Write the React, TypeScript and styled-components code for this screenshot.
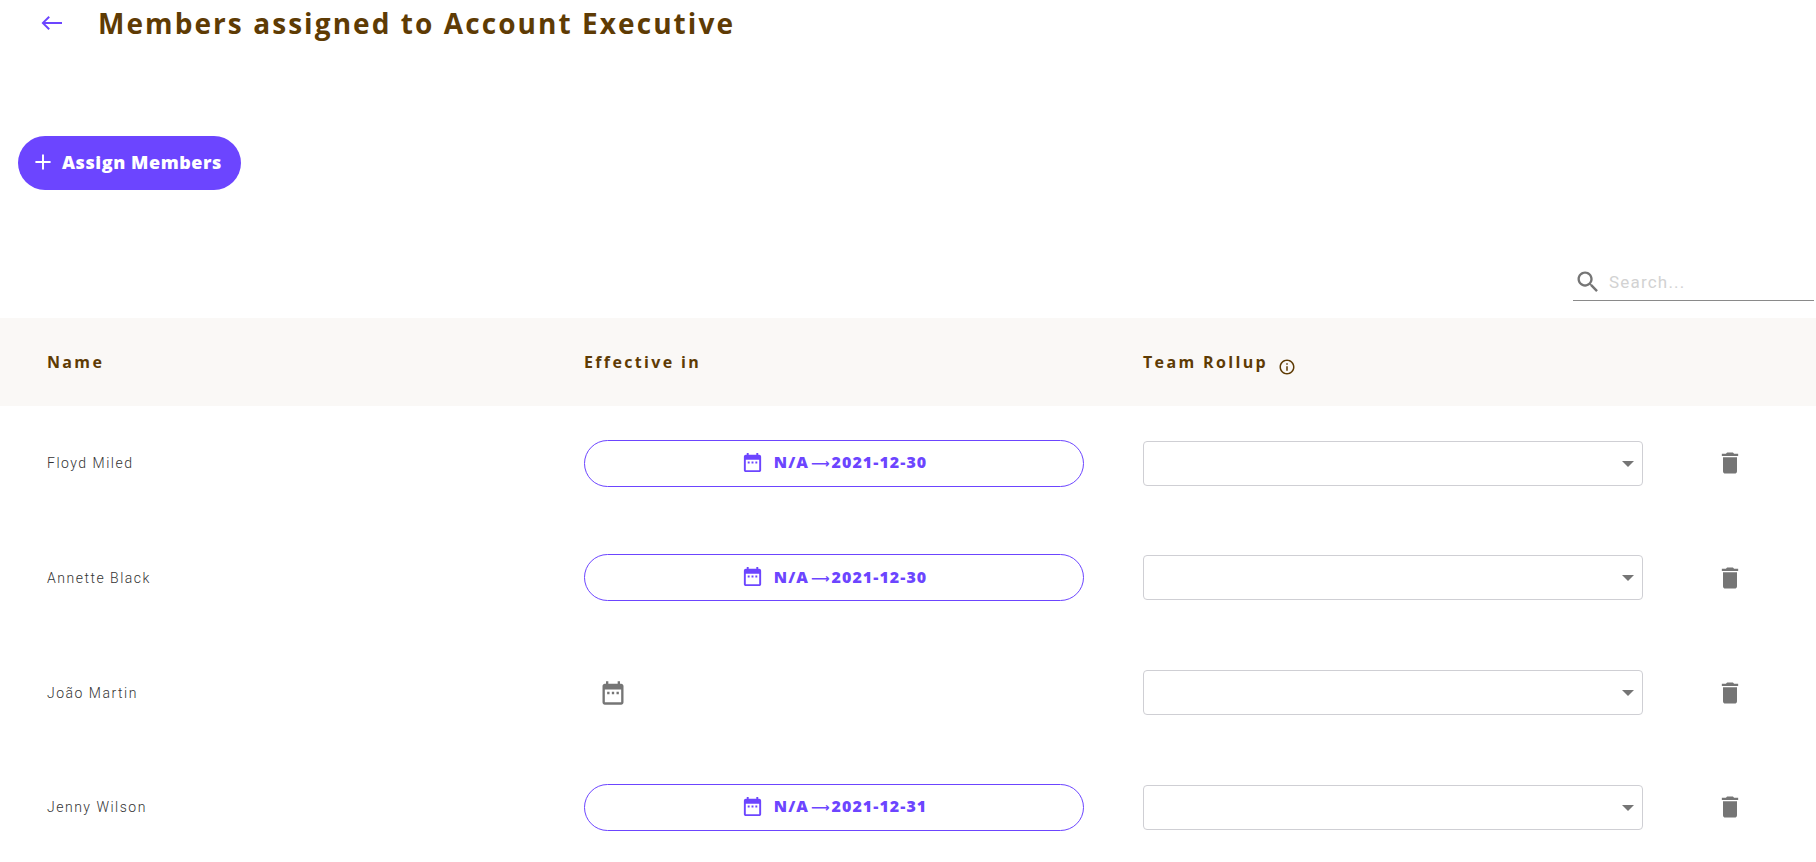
import React from "react";
import styled, { createGlobalStyle } from "styled-components";

const Global = createGlobalStyle`
  html, body { margin: 0; padding: 0; background: #fff; height: 100%; overflow: hidden; }
  body { font-family: "Open Sans", "Liberation Sans", sans-serif; }
`;

const Page = styled.div`
  width: 1816px;
  height: 862px;
  overflow: hidden;
  display: flex;
  flex-direction: column;
  & > * {
    flex-shrink: 0;
  }
`;

const TitleBar = styled.header`
  display: flex;
  align-items: center;
  height: 46px;
  padding-left: 40px;
`;

const BackButton = styled.button`
  display: flex;
  align-items: center;
  justify-content: center;
  width: 24px;
  height: 24px;
  padding: 0;
  border: 0;
  background: none;
  color: #6c45ff;
  margin-right: 34px;
`;

const Title = styled.h1`
  margin: 0;
  font-family: "Open Sans", sans-serif;
  font-size: 28px;
  font-weight: 700;
  letter-spacing: 2.07px;
  color: #5e3b04;
`;

const ActionRow = styled.div`
  padding: 90px 0 0 18px;
`;

const AssignButton = styled.button`
  display: flex;
  align-items: center;
  gap: 6px;
  width: 223px;
  height: 54px;
  padding: 0 0 2px 12px;
  border: 0;
  border-radius: 27px;
  background: #6c45ff;
  color: #fff;
  font-family: "Open Sans", sans-serif;
  font-size: 18px;
  font-weight: 800;
  letter-spacing: 0.55px;
`;

const SearchRow = styled.div`
  display: flex;
  justify-content: flex-end;
  padding: 76px 2px 0 0;
`;

const SearchBox = styled.div`
  display: flex;
  align-items: center;
  width: 241px;
  height: 35px;
  border-bottom: 1px solid #8a8a8a;
  color: #757575;
  gap: 7px;
  padding: 0 0 2px 1px;
  box-sizing: border-box;
`;

const SearchText = styled.span`
  font-family: "Roboto", sans-serif;
  font-size: 17px;
  letter-spacing: 1.2px;
  color: #d2d2d2;
`;

const Grid = styled.div`
  display: grid;
  grid-template-columns: 537px 559px 501px 1fr;
  align-items: center;
  padding-left: 47px;
`;

const HeaderRow = styled(Grid)`
  height: 88px;
  margin-top: 17px;
  background: #faf8f6;
`;

const HeaderCell = styled.div`
  display: flex;
  align-items: center;
  gap: 10px;
  font-family: "Open Sans", sans-serif;
  font-size: 16px;
  font-weight: 700;
  letter-spacing: 2.35px;
  color: #5e3b04;
`;

const InfoIcon = styled.svg`
  width: 18px;
  height: 18px;
  margin-top: 10px;
  fill: #5e3b04;
`;

const Row = styled(Grid)`
  height: 114.67px;
`;

const Name = styled.div`
  font-family: "Roboto", sans-serif;
  font-size: 14px;
  font-weight: 300;
  letter-spacing: 1.5px;
  color: #333;
`;

const DatePill = styled.button`
  display: flex;
  align-items: center;
  justify-content: center;
  gap: 10px;
  width: 500px;
  height: 47px;
  padding: 0 0 2px;
  border: 1px solid #6c45ff;
  border-radius: 24px;
  background: #fff;
  color: #6c45ff;
  font-family: "Open Sans", sans-serif;
  font-size: 16px;
  font-weight: 800;
  letter-spacing: 1.05px;
`;

const ArrowGlyph = styled.span`
  margin: 0 2px;
  font-family: "DejaVu Sans", sans-serif;
  font-size: 13px;
  font-weight: 700;
  letter-spacing: 0;
`;

const EmptyDate = styled.div`
  display: flex;
  align-items: center;
  padding-left: 15px;
  color: #757575;
`;

const Select = styled.div`
  position: relative;
  width: 500px;
  height: 45px;
  box-sizing: border-box;
  border: 1px solid #cfcfd4;
  border-radius: 4px;
  background: #fff;
`;

const Caret = styled.span`
  position: absolute;
  right: 8px;
  top: 19px;
  width: 0;
  height: 0;
  border-left: 6px solid transparent;
  border-right: 6px solid transparent;
  border-top: 6px solid #757575;
`;

const Trash = styled.button`
  display: flex;
  justify-content: center;
  width: 28px;
  margin-left: 72px;
  padding: 0;
  border: 0;
  background: none;
  color: #757575;
`;

const Icon = ({ d, size }: { d: string; size: number }) => (
  <svg width={size} height={size} viewBox="0 0 24 24" fill="currentColor" aria-hidden="true">
    <path d={d} />
  </svg>
);

const CAL =
  "M9 11H7v2h2v-2zm4 0h-2v2h2v-2zm4 0h-2v2h2v-2zm2-7h-1V2h-2v2H8V2H6v2H5c-1.11 0-1.99.9-1.99 2L3 20c0 1.1.89 2 2 2h14c1.1 0 2-.9 2-2V6c0-1.1-.9-2-2-2zm0 16H5V9h14v11z";
const TRASH = "M6 19c0 1.1.9 2 2 2h8c1.1 0 2-.9 2-2V7H6v12zM19 4h-3.5l-1-1h-5l-1 1H5v2h14V4z";
const SEARCH =
  "M15.5 14h-.79l-.28-.27C15.41 12.59 16 11.11 16 9.5 16 5.91 13.09 3 9.5 3S3 5.91 3 9.5 5.91 16 9.5 16c1.61 0 3.09-.59 4.23-1.57l.27.28v.79l5 4.99L20.49 19l-4.99-5zm-6 0C7.01 14 5 11.99 5 9.5S7.01 5 9.5 5 14 7.01 14 9.5 11.99 14 9.5 14z";
const BACK = "M22 11H5.2l4.7-4.6L8.5 5 1.5 12l7 7 1.4-1.4L5.2 13H22v-2z";
const PLUS = "M19 12.9h-6.1V19h-1.8v-6.1H5v-1.8h6.1V5h1.8v6.1H19v1.8z";
const INFO =
  "M11 7h2v2h-2zm0 4h2v6h-2zm1-9C6.48 2 2 6.48 2 12s4.48 10 10 10 10-4.48 10-10S17.52 2 12 2zm0 18c-4.41 0-8-3.59-8-8s3.59-8 8-8 8 3.59 8 8-3.59 8-8 8z";

const members = [
  { name: "Floyd Miled", date: "2021-12-30" },
  { name: "Annette Black", date: "2021-12-30" },
  { name: "João Martin", date: null },
  { name: "Jenny Wilson", date: "2021-12-31" },
];

export default function App() {
  return (
    <Page>
      <Global />
      <TitleBar>
        <BackButton aria-label="Back">
          <Icon d={BACK} size={24} />
        </BackButton>
        <Title>Members assigned to Account Executive</Title>
      </TitleBar>
      <ActionRow>
        <AssignButton>
          <Icon d={PLUS} size={26} />
          Assign Members
        </AssignButton>
      </ActionRow>
      <SearchRow>
        <SearchBox>
          <Icon d={SEARCH} size={28} />
          <SearchText>Search...</SearchText>
        </SearchBox>
      </SearchRow>
      <HeaderRow>
        <HeaderCell>Name</HeaderCell>
        <HeaderCell>Effective in</HeaderCell>
        <HeaderCell>
          Team Rollup
          <InfoIcon viewBox="0 0 24 24">
            <path d={INFO} />
          </InfoIcon>
        </HeaderCell>
      </HeaderRow>
      {members.map((m) => (
        <Row key={m.name}>
          <Name>{m.name}</Name>
          {m.date ? (
            <DatePill>
              <Icon d={CAL} size={23} />
              <span>
                N/A<ArrowGlyph>⟶</ArrowGlyph>
                {m.date}
              </span>
            </DatePill>
          ) : (
            <EmptyDate>
              <Icon d={CAL} size={28} />
            </EmptyDate>
          )}
          <Select>
            <Caret />
          </Select>
          <Trash aria-label="Delete">
            <Icon d={TRASH} size={28} />
          </Trash>
        </Row>
      ))}
    </Page>
  );
}
